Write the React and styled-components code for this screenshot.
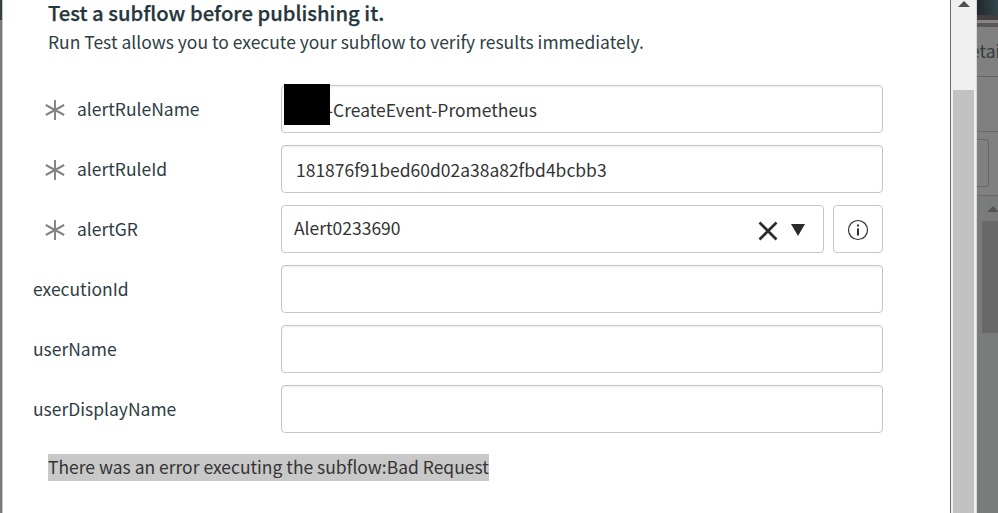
import React from 'react'
import styled, { createGlobalStyle } from 'styled-components'

const GlobalStyle = createGlobalStyle`
    * {
        box-sizing: border-box;
    }
    body {
        margin: 0;
        overflow: hidden;
        background: #7f7f7f;
        color: #2e3d44;
        font-family: "Noto Sans CJK SC", "Open Sans", sans-serif;
        font-size: 17.48px;
    }
    h2, p {
        margin: 0;
    }
`;

const requiredFields = [
    { name: "alertRuleName", value: "-CreateEvent-Prometheus", redacted: true },
    { name: "alertRuleId", value: "181876f91bed60d02a38a82fbd4bcbb3" },
]
const optionalFields = ["executionId", "userName", "userDisplayName"]

function RequiredMark() {
    return (
        <Mark viewBox="0 0 20 20">
            <path d="M10 0V20M0.8 5L19.2 15M19.2 5L0.8 15" />
        </Mark>
    )
}

function TextField({ name, value, required, redacted }) {
    return (
        <Row>
            <Label $required={required}>
                {required && <RequiredMark />}
                <span>{name}</span>
            </Label>
            <Input>
                {redacted && <Redaction />}
                <Value $inset={redacted ? 0 : 14}>{value}</Value>
            </Input>
        </Row>
    )
}

function ReferenceField({ name, value }) {
    return (
        <Row>
            <Label $required>
                <RequiredMark />
                <span>{name}</span>
            </Label>
            <Picker>
                <Value $inset={12}>{value}</Value>
                <ClearIcon viewBox="0 0 20 20">
                    <path d="M1.5 1.5L18.5 18.5M18.5 1.5L1.5 18.5" />
                </ClearIcon>
                <CaretIcon viewBox="0 0 14 12">
                    <path d="M0 0H14L7 12Z" />
                </CaretIcon>
            </Picker>
            <InfoButton>
                <svg width="22" height="22" viewBox="0 0 22 22">
                    <circle cx="11" cy="11" r="9.5" fill="none" stroke="#303030" strokeWidth="1.2" />
                    <path d="M10 5.5h2v2h-2zM10 9.5h2v7h-2z" fill="#303030" />
                </svg>
            </InfoButton>
        </Row>
    )
}

function App() {
    return (
        <Screen>
            <GlobalStyle />
            <LeftBackdrop>
                <LeftHeader />
            </LeftBackdrop>
            <Modal>
                <Title>Test a subflow before publishing it.</Title>
                <Subtitle>Run Test allows you to execute your subflow to verify results immediately.</Subtitle>
                <Form>
                    {requiredFields.map((field) => (
                        <TextField key={field.name} required {...field} />
                    ))}
                    <ReferenceField name="alertGR" value="Alert0233690" />
                    {optionalFields.map((name) => (
                        <TextField key={name} name={name} />
                    ))}
                </Form>
                <ErrorText>There was an error executing the subflow:Bad Request</ErrorText>
            </Modal>
            <ScrollTrack>
                <ScrollArrow viewBox="0 0 12 6">
                    <path d="M0 6L6 0L12 6Z" />
                </ScrollArrow>
                <ScrollThumb />
            </ScrollTrack>
            <RightBackdrop>
                <TopBar />
                <TopStripe />
                <TabBar><span>etai</span></TabBar>
                <Section />
                <BoxSection><Box /></BoxSection>
                <Panel>
                    <PanelArrow viewBox="0 0 12 6">
                        <path d="M0 6L6 0L12 6Z" />
                    </PanelArrow>
                    <PanelThumb />
                </Panel>
            </RightBackdrop>
        </Screen>
    )
}

export default App

const Screen = styled.div`
    display: flex;
    width: 998px;
    height: 513px;
    overflow: hidden;
`;

const LeftBackdrop = styled.div`
    width: 3px;
    background: #7b7b7b;
    border-right: 1px solid #c4c4c4;
`;

const LeftHeader = styled.div`
    height: 20px;
    background: #344043;
`;

const Modal = styled.main`
    width: 948px;
    background: #fff;
    border-right: 1px solid #6a6a6a;
`;

const Title = styled.h2`
    height: 28px;
    padding-left: 45px;
    font-size: 20.25px;
    font-weight: 500;
    -webkit-text-stroke: 0.25px #26363d;
    line-height: 25px;
    white-space: nowrap;
    color: #26363d;
`;

const Subtitle = styled.p`
    height: 57px;
    padding-left: 45px;
    line-height: 27px;
    white-space: nowrap;
`;

const Form = styled.div`
    display: flex;
    flex-direction: column;
    gap: 12px;
`;

const Row = styled.div`
    display: flex;
    height: 48px;
    padding-left: 30px;
`;

const Label = styled.label`
    display: flex;
    align-items: center;
    width: 248px;
    padding-left: ${(props) => (props.$required ? 12 : 0)}px;

    span {
        line-height: 48px;
    }
`;

const Mark = styled.svg`
    width: 20px;
    height: 20px;
    margin: 2px 12px 0 0;
    fill: none;
    stroke: #858585;
    stroke-width: 2;
`;

const Input = styled.div`
    display: flex;
    width: 602px;
    border: 1px solid #c6c6c6;
    border-radius: 4px;
    box-shadow: inset 0 1px 2px rgba(0, 0, 0, 0.07);
    color: #343434;
`;

const Picker = styled(Input)`
    align-items: center;
    width: 543px;
    box-shadow: none;

    > span {
        line-height: 42px;
        padding-bottom: 2px;
    }
`;

const Redaction = styled.span`
    position: relative;
    width: 46px;
    height: 41px;
    margin: -2px -3px 0 2px;
    background: #000;
`;

const Value = styled.span`
    flex: 1;
    padding-left: ${(props) => props.$inset}px;
    line-height: 47px;
    white-space: nowrap;
`;

const ClearIcon = styled.svg`
    width: 20px;
    height: 20px;
    margin: 3px 13px 0 0;
    stroke: #2b2b2b;
    stroke-width: 2.7;
`;

const CaretIcon = styled.svg`
    width: 14px;
    height: 12px;
    margin: 1px 18px 0 0;
    fill: #2b2b2b;
`;

const InfoButton = styled.button`
    display: flex;
    align-items: center;
    justify-content: center;
    width: 50px;
    height: 48px;
    margin-left: 9px;
    padding: 2px 0 0;
    border: 1px solid #c6c6c6;
    border-radius: 4px;
    background: #fff;
`;

const ErrorText = styled.p`
    width: 441px;
    height: 27px;
    margin: 21px 0 0 45px;
    line-height: 25px;
    white-space: nowrap;
    background: #c8c8c8;
    color: #343434;
`;

const ScrollTrack = styled.div`
    display: flex;
    flex-direction: column;
    align-items: center;
    width: 26px;
    background: #f0f0f0;
    border-right: 1px solid #d8d8d8;
`;

const ScrollArrow = styled.svg`
    width: 12px;
    height: 6px;
    margin: 1px 0 83px;
    fill: #505050;
`;

const ScrollThumb = styled.div`
    flex: 1;
    width: 21px;
    background: #c1c1c1;
`;

const RightBackdrop = styled.div`
    width: 21px;
    overflow: hidden;
    background: #808080;
`;

const TopBar = styled.div`
    height: 20px;
    background: linear-gradient(90deg, #1f292c, #34454a);
    border-bottom: 5px solid #423e41;
`;

const TopStripe = styled.div`
    height: 7px;
    background: #5b5758;
    border-top: 3px solid #858585;
`;

const TabBar = styled.div`
    height: 50px;
    border-bottom: 1px solid #656565;
    color: #363c3e;
    line-height: 48px;

    span {
        margin-left: -7px;
    }
`;

const Section = styled.div`
    height: 55px;
    border-bottom: 1px solid #686868;
`;

const BoxSection = styled.div`
    height: 64px;
    padding-top: 7px;
    border-bottom: 1px solid #686868;
`;

const Box = styled.div`
    width: 12px;
    height: 48px;
    border: 1px solid #666;
    border-left: 0;
    border-radius: 0 4px 4px 0;
`;

const Panel = styled.div`
    display: flex;
    flex-direction: column;
    height: 317px;
    padding-left: 5px;
    background: #7a7b7b;
`;

const PanelArrow = styled.svg`
    width: 12px;
    height: 6px;
    margin: 10px 0 9px 5px;
    flex-shrink: 0;
    fill: #555;
`;

const PanelThumb = styled.div`
    height: 112px;
    background: #686868;
`;
